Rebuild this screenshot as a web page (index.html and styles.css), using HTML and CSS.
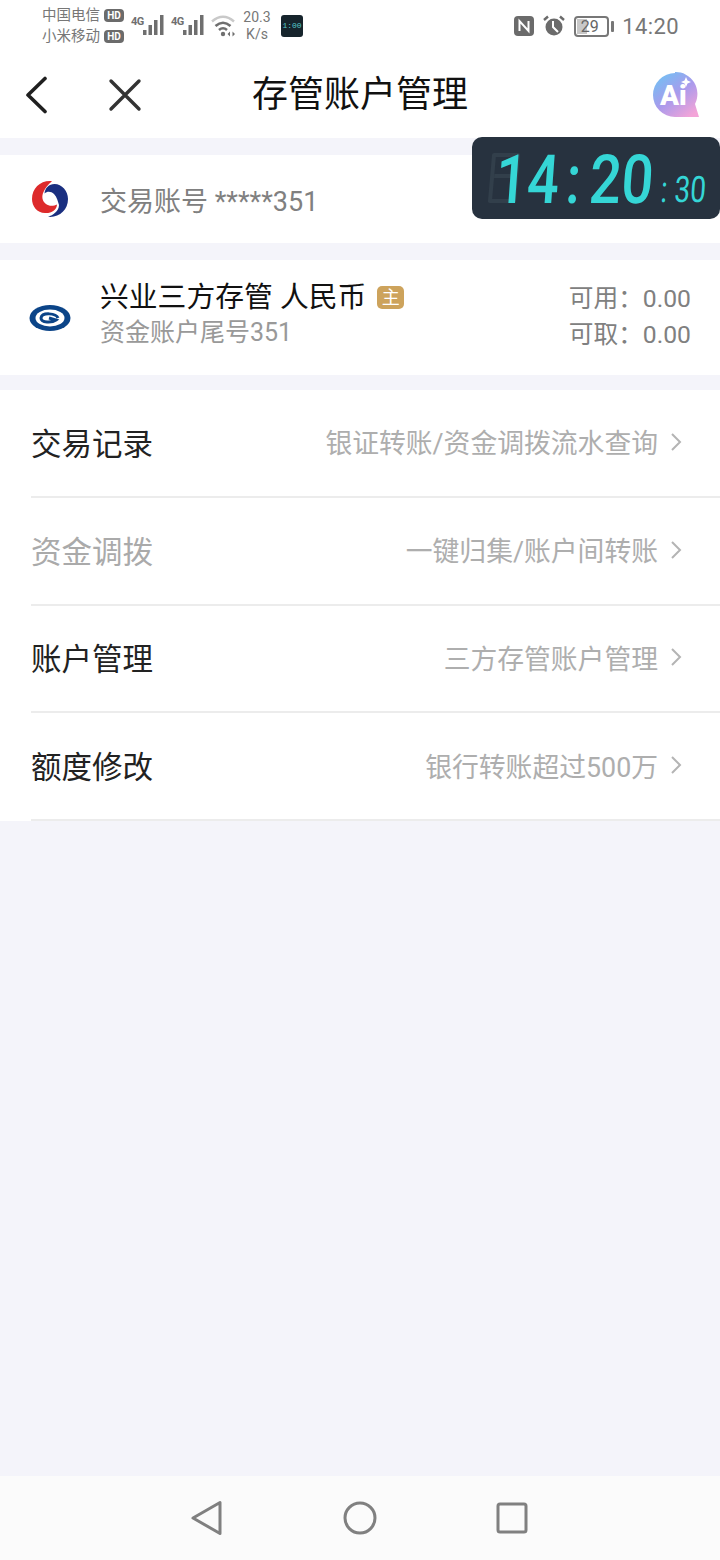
FILE: index.html
```html
<!DOCTYPE html>
<html lang="zh-CN">
<head>
  <meta charset="UTF-8" />
  <meta name="viewport" content="width=device-width, initial-scale=1.0"/>
  <title>存管账户管理</title>
  <link rel="stylesheet" href="styles.css">
</head>
<body>
  <div class="page">
    <div class="statusbar">
      <div class="carriers">
        <div class="carrier">中国电信<span class="hd">HD</span></div>
        <div class="carrier">小米移动<span class="hd">HD</span></div>
      </div>
      <div class="signal">
        <span class="gen">4G</span>
        <svg width="24" height="24" viewBox="0 0 24 24"><g fill="#6f6f6f"><rect x="0" y="16" width="3.5" height="5"/><rect x="5.500" y="11" width="3.500" height="10"/><rect x="11" y="6" width="3.500" height="15"/><rect x="17" y="1" width="3.500" height="20"/></g></svg>
      </div>
      <div class="signal">
        <span class="gen">4G</span>
        <svg width="24" height="24" viewBox="0 0 24 24"><g fill="#6f6f6f"><rect x="0" y="16" width="3.5" height="5"/><rect x="5.500" y="11" width="3.500" height="10"/><rect x="11" y="6" width="3.500" height="15"/><rect x="17" y="1" width="3.500" height="20"/></g></svg>
      </div>
      <svg class="wifi" width="26" height="24" viewBox="0 0 26 24" fill="none"><path d="M1 7.500Q12 -2 23 7.500" stroke="#c9c9c9" stroke-width="2.500"/><path d="M4.500 12Q12 5.500 19.500 12" stroke="#6f6f6f" stroke-width="2.600"/><path d="M8 16Q12 12.500 16 16" stroke="#6f6f6f" stroke-width="2.600"/><circle cx="12" cy="20" r="2.200" fill="#6f6f6f"/><path d="M19 17.500v5l-2.500-2.500zM21.500 22.500v-5l2.500 2.500z" fill="#6f6f6f"/></svg>
      <div class="speed"><div>20.3</div><div>K/s</div></div>
      <div class="appicon">1:00</div>
      <div class="status-right">
        <svg width="22" height="24" viewBox="0 0 22 24"><rect x="1" y="2" width="20" height="20" rx="4" fill="#6b6b6b"/><path d="M6.500 17V7l9 10V7" fill="none" stroke="#fff" stroke-width="2"/></svg>
        <svg width="24" height="24" viewBox="0 0 24 24"><circle cx="12" cy="13" r="8.500" fill="#6b6b6b"/><path d="M11 7v6l5 5" fill="none" stroke="#fff" stroke-width="2"/><path d="M2 6l4-3.500M22 6l-4-3.500" stroke="#6b6b6b" stroke-width="2.400"/></svg>
        <div class="battery"><div class="battery-body"><span class="battery-fill"></span><span class="battery-num">29</span></div><span class="battery-tip"></span></div>
        <span class="time">14:20</span>
      </div>
    </div>

    <div class="navbar">
      <svg class="nav-back" width="24" height="38" viewBox="0 0 24 38" fill="none"><path d="M21 2.500L4 19l17 16.500" stroke="#1f1f1f" stroke-width="3.600" stroke-linecap="round" stroke-linejoin="round"/></svg>
      <svg class="nav-close" width="34" height="34" viewBox="0 0 34 34" fill="none"><path d="M3 3l28 28M31 3L3 31" stroke="#333" stroke-width="3.400" stroke-linecap="round"/></svg>
      <h1 class="nav-title">存管账户管理</h1>
      <svg class="nav-ai" width="46" height="46" viewBox="0 0 46 46">
        <defs>
          <linearGradient id="aiGrad" x1="0.100" y1="0.100" x2="0.800" y2="1">
            <stop offset="0" stop-color="#74bff3"/>
            <stop offset="0.500" stop-color="#a99aec"/>
            <stop offset="1" stop-color="#f3a4d8"/>
          </linearGradient>
        </defs>
        <path d="M22 0a22 22 0 0 1 20 32l4 13H22a22 22 0 0 1 0-44z" fill="url(#aiGrad)"/>
        <text x="7" y="33" class="ai-text">Ai</text>
        <path d="M33 5l1.500 3.500 3.500 1.500-3.500 1.500-1.500 3.500-1.500-3.500-3.500-1.500 3.500-1.500z" fill="#fff"/>
      </svg>
    </div>

    <div class="card account-row">
      <svg class="logo" width="38" height="38" viewBox="0 0 38 38">
        <path d="M21 1.200C10 0 1 8 1 19C1 26 6 33 14 33C20 33.500 26 30 26 24.500C23 26 18 26.500 15 24C11 21 10.500 16 12.500 12C14 8 17 4.500 21 1.200Z" fill="#dd2a2b"/>
        <path d="M17 36.800C28 38 37 30 37 19C37 11 31 4 23.500 4C18 4 14 8 13.500 13.500C16 11 20 11 23 14C26 17 27 22 28 25C28 31 22 35.300 17 36.800Z" fill="#1a2f80"/>
      </svg>
      <span class="account-text">交易账号 *****351</span>
    </div>

    <div class="card bank-row">
      <svg class="logo" width="42" height="28" viewBox="0 0 42 28" fill="none">
        <ellipse cx="21" cy="14" rx="20.500" ry="13" fill="#0b4488"/>
        <ellipse cx="21" cy="14" rx="14.500" ry="8.500" fill="#fff"/>
        <path d="M29 14c-2-5-16-6-17 0 0 5 11 5 15 2l-7-2" stroke="#0b4488" stroke-width="3"/>
      </svg>
      <div class="bank-info">
        <div class="bank-name">兴业三方存管 人民币<span class="tag">主</span></div>
        <div class="bank-sub">资金账户尾号351</div>
      </div>
      <div class="balance">
        <div>可用：0.00</div>
        <div>可取：0.00</div>
      </div>
    </div>

    <div class="menu">
      <div class="menu-row">
        <span class="menu-label">交易记录</span>
        <span class="menu-hint">银证转账/资金调拨流水查询</span>
        <svg class="chevron" width="12" height="20" viewBox="0 0 12 20" fill="none"><path d="M2 2l8 8-8 8" stroke="#b4b4b4" stroke-width="2"/></svg>
      </div>
      <div class="menu-row disabled">
        <span class="menu-label">资金调拨</span>
        <span class="menu-hint">一键归集/账户间转账</span>
        <svg class="chevron" width="12" height="20" viewBox="0 0 12 20" fill="none"><path d="M2 2l8 8-8 8" stroke="#b4b4b4" stroke-width="2"/></svg>
      </div>
      <div class="menu-row">
        <span class="menu-label">账户管理</span>
        <span class="menu-hint">三方存管账户管理</span>
        <svg class="chevron" width="12" height="20" viewBox="0 0 12 20" fill="none"><path d="M2 2l8 8-8 8" stroke="#b4b4b4" stroke-width="2"/></svg>
      </div>
      <div class="menu-row">
        <span class="menu-label">额度修改</span>
        <span class="menu-hint">银行转账超过500万</span>
        <svg class="chevron" width="12" height="20" viewBox="0 0 12 20" fill="none"><path d="M2 2l8 8-8 8" stroke="#b4b4b4" stroke-width="2"/></svg>
      </div>
    </div>

    <div class="spacer"></div>

    <div class="sysnav">
      <svg width="34" height="36" viewBox="0 0 34 36" fill="none"><path d="M30 2.500V33.500L3 18z" stroke="#808080" stroke-width="3" stroke-linejoin="round"/></svg>
      <svg width="34" height="34" viewBox="0 0 34 34" fill="none"><circle cx="17" cy="17" r="15" stroke="#808080" stroke-width="3"/></svg>
      <svg width="32" height="32" viewBox="0 0 32 32" fill="none"><rect x="2" y="2" width="28" height="28" rx="2" stroke="#808080" stroke-width="3"/></svg>
    </div>

    <div class="clock">
      <div class="clock-ghost"></div>
      <div class="clock-main">14<span class="colon">:</span>20</div>
      <div class="clock-sec"><span class="colon-small">:</span>30</div>
    </div>
  </div>
</body>
</html>
```

FILE: styles.css
```css
* {
  box-sizing: border-box;
}

html, body {
  margin: 0;
  padding: 0;
}

body {
  font-family: "Roboto", "Noto Sans CJK SC", sans-serif;
  background-color: #f4f4fa;
}

.page {
  position: relative;
  width: 720px;
  height: 1560px;
  display: flex;
  flex-direction: column;
  overflow: hidden;
}

/* status bar */
.statusbar {
  height: 52px;
  background-color: #fff;
  display: flex;
  align-items: center;
  padding: 0 41px 0 42px;
  color: #777;
}

.carriers {
  font-size: 14.500px;
  line-height: 21px;
  width: 89px;
}

.carrier {
  display: flex;
  align-items: center;
  white-space: nowrap;
}

.hd {
  background-color: #6b6b6b;
  color: #fff;
  font-size: 10px;
  font-weight: 700;
  line-height: 13px;
  width: 20px;
  text-align: center;
  border-radius: 4px;
  margin-left: 4px;
}

.signal {
  display: flex;
  align-items: flex-start;
  width: 40px;
  height: 24px;
}

.gen {
  font-size: 11px;
  font-weight: 700;
  line-height: 14px;
  width: 12px;
  letter-spacing: -0.5px;
  margin-top: 1px;
  color: #6f6f6f;
}

.speed {
  font-size: 14px;
  line-height: 17px;
  text-align: center;
  margin-left: 5px;
  width: 30px;
}

.appicon {
  width: 22px;
  height: 22px;
  margin-left: 9px;
  background-color: #16242c;
  color: #57c9c9;
  font-family: "Liberation Mono", monospace;
  font-size: 8px;
  line-height: 22px;
  text-align: center;
  border-radius: 3px;
}

.status-right {
  margin-left: auto;
  display: flex;
  align-items: center;
  gap: 7px;
}

.battery {
  display: flex;
  align-items: center;
  margin-left: 1px;
}

.battery-body {
  position: relative;
  width: 35px;
  height: 21px;
  border: 2px solid #777;
  border-radius: 4px;
  font-size: 16px;
  line-height: 17px;
  text-align: center;
  padding-right: 4px;
  color: #666;
  overflow: hidden;
}

.battery-fill {
  position: absolute;
  left: 1px;
  top: 1px;
  bottom: 1px;
  width: 10px;
  background-color: #c8c8c8;
}

.battery-num {
  position: relative;
}

.battery-tip {
  width: 3px;
  height: 11px;
  margin-left: 2px;
  background-color: #777;
  border-radius: 1px;
}

.time {
  font-size: 22px;
  margin-left: 1px;
  letter-spacing: 0.4px;
}

/* title bar */
.navbar {
  height: 86px;
  background-color: #fff;
  display: flex;
  align-items: center;
  padding: 0 21px 0 24px;
}

.nav-close {
  margin-left: 60px;
}

.nav-title {
  margin: 0 0 0 110px;
  font-size: 36px;
  font-weight: 400;
  color: #111;
  line-height: 50px;
  white-space: nowrap;
  width: 216px;
}

.nav-ai {
  margin-left: auto;
}

.ai-text {
  font-family: "Roboto", sans-serif;
  font-size: 28px;
  font-weight: 900;
  fill: #fff;
}

/* account cards */
.card {
  background-color: #fff;
  display: flex;
  align-items: center;
}

.account-row {
  margin-top: 17px;
  height: 88px;
  padding-left: 31px;
}

.account-text {
  margin-left: 31px;
  font-size: 27px;
  color: #808080;
}

.bank-row {
  margin-top: 17px;
  height: 115px;
  padding: 0 29px 0 29px;
}

.bank-info {
  margin-left: 29px;
  margin-bottom: 8px;
  flex: 1;
}

.bank-name {
  display: flex;
  align-items: center;
  font-size: 28.800px;
  line-height: 38px;
  color: #111;
  white-space: pre;
}

.tag {
  background-color: #cda35c;
  color: #fff;
  font-size: 18px;
  line-height: 23px;
  width: 27px;
  text-align: center;
  border-radius: 5px;
  margin-left: 11px;
}

.bank-sub {
  font-size: 25px;
  line-height: 33px;
  color: #999;
}

.balance {
  font-size: 24.700px;
  line-height: 36px;
  color: #808080;
  white-space: nowrap;
  margin-bottom: 2px;
}

/* menu */
.menu {
  margin-top: 15px;
  background-color: #fff;
}

.menu-row {
  height: 107.750px;
  margin-left: 31px;
  padding-right: 38px;
  padding-bottom: 2px;
  display: flex;
  align-items: center;
  border-bottom: 2px solid #ececec;
}

.menu-label {
  font-size: 30.500px;
  color: #222;
}

.menu-row.disabled .menu-label {
  color: #aaa;
}

.menu-hint {
  margin-left: auto;
  font-size: 26.800px;
  color: #aeaeae;
}

.chevron {
  margin-left: 12px;
}

.spacer {
  flex: 1;
}

/* system navigation */
.sysnav {
  height: 84px;
  background-color: #fbfbfb;
  display: flex;
  align-items: center;
  justify-content: center;
  gap: 119px;
  padding-right: 2px;
}

/* floating clock widget */
.clock {
  position: absolute;
  left: 472px;
  top: 137px;
  width: 248px;
  height: 82px;
  background-color: #27323f;
  border-radius: 10px;
  color: #35d6d6;
  display: flex;
  align-items: flex-start;
  padding: 24px 0 0 22px;
  font-family: "Roboto", sans-serif;
}

.clock-ghost {
  position: absolute;
  left: 18px;
  top: 16px;
  width: 28px;
  height: 50px;
  border: 4px solid #323f4b;
  border-radius: 2px;
  transform: skewX(-5deg);
}

.clock-ghost::after {
  content: "";
  position: absolute;
  left: 0;
  right: 0;
  top: 17px;
  height: 4px;
  background-color: #323f4b;
}

.clock-main {
  position: relative;
  font-size: 50px;
  font-weight: 500;
  line-height: 50px;
  white-space: nowrap;
  transform-origin: 0 42px;
  transform: scale(1.12, 1.36) skewX(-5deg);
}

.colon {
  margin: 0 8px 0 6px;
}

.clock-sec {
  font-size: 28px;
  line-height: 28px;
  margin: 18px 0 0 25px;
  white-space: nowrap;
  transform-origin: 0 24px;
  transform: scaleY(1.3) skewX(-5deg);
}

.colon-small {
  margin-right: 7px;
}
```
